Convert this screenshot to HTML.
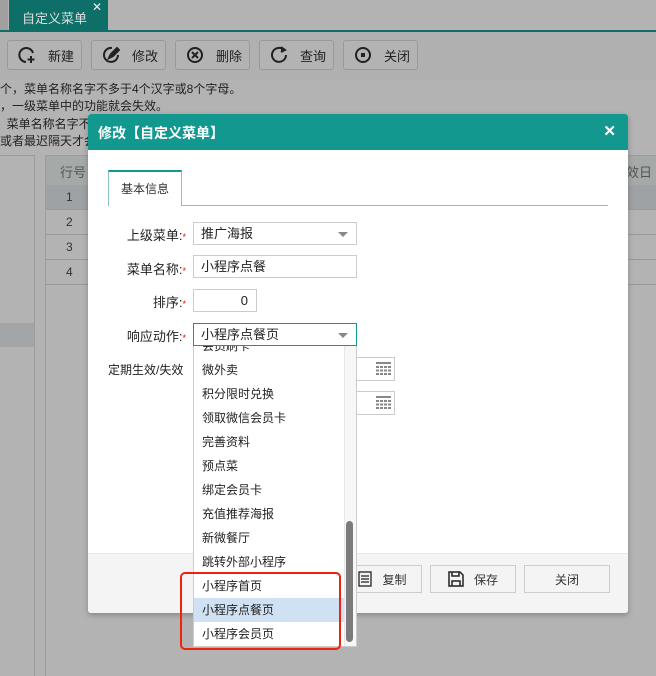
<!DOCTYPE html>
<html><head><meta charset="utf-8"><style>
*{margin:0;padding:0;box-sizing:border-box}
html,body{width:656px;height:676px;overflow:hidden}
body{background:#b3b3b3;font-family:"Liberation Sans","Noto Sans CJK SC",sans-serif;font-size:12px;color:#333;position:relative}
.a{position:absolute}
.tb{top:40px;width:75px;height:30px;border:1px solid #999;border-radius:3px;background:#b3b3b3;font-size:13px;color:#222;display:flex;align-items:center;padding-left:10px}
.tb svg{margin-right:12px}
.txt{left:0;font-size:12px;color:#222;white-space:nowrap}
.lbl{width:86px;text-align:right;left:100px;font-size:13px;color:#222}
.star{color:#e00;font-size:9px}
.inp{border:1px solid #ccc;background:#fff;height:23px;font-size:13px;color:#222;padding-left:7px;line-height:21px}
.arr{position:absolute;right:8px;top:9px;width:0;height:0;border-left:5px solid transparent;border-right:5px solid transparent;border-top:5px solid #888}
.it{position:absolute;left:0;width:150px;height:24px;line-height:24px;padding-left:8px;font-size:12px;color:#222}
.fb{top:565px;height:28px;border:1px solid #ccc;background:#f4f4f4;font-size:12px;color:#333;display:flex;align-items:center;justify-content:center}
</style></head><body>
<div class="a" style="left:0;top:0;width:8px;height:30px;background:#a0a0a0"></div>
<div class="a" style="left:9px;top:0;width:99px;height:31px;background:#0e6f69;color:#ddd;font-size:13px;padding:8px 0 0 13px">自定义菜单<span style="position:absolute;right:6px;top:0px;color:#eee;font-size:12px">✕</span></div>
<div class="a" style="left:0;top:30px;width:656px;height:2px;background:#0e6f69"></div>
<div class="a" style="left:0;top:32px;width:656px;height:48px;background:#b0b0b0"></div>
<div class="a tb" style="left:7px"><svg width="18" height="18" viewBox="0 0 18 18" fill="none" stroke="#222" stroke-width="2"><path d="M15 7A7 7 0 1 0 8 16"/><path d="M13 10v7M9.5 13.5h7"/></svg>新建</div>
<div class="a tb" style="left:91px"><svg width="18" height="18" viewBox="0 0 18 18" fill="none" stroke="#222" stroke-width="2"><path d="M10 2A7 7 0 1 0 16 9"/><path d="M7 12l2-4 6-6 2 2-6 6z" fill="#222"/></svg>修改</div>
<div class="a tb" style="left:175px"><svg width="18" height="18" viewBox="0 0 18 18" fill="none" stroke="#222" stroke-width="2"><circle cx="9" cy="9" r="7"/><path d="M6 6l6 6M12 6l-6 6"/></svg>删除</div>
<div class="a tb" style="left:259px"><svg width="18" height="18" viewBox="0 0 18 18" fill="none" stroke="#222" stroke-width="2"><path d="M14 4A7 7 0 1 0 16 9"/><path d="M11 1l4 3-4 2" fill="#222"/></svg>查询</div>
<div class="a tb" style="left:343px"><svg width="18" height="18" viewBox="0 0 18 18" fill="none" stroke="#222" stroke-width="2"><circle cx="9" cy="9" r="7"/><rect x="7" y="7" width="4" height="4" fill="#222" stroke="none"/></svg>关闭</div>
<div class="a txt" style="top:80px">个，菜单名称名字不多于4个汉字或8个字母。</div>
<div class="a txt" style="top:97px">，一级菜单中的功能就会失效。</div>
<div class="a txt" style="top:115px">&nbsp;&nbsp;菜单名称名字不</div>
<div class="a txt" style="top:132px">或者最迟隔天才会</div>
<div class="a" style="left:-1px;top:155px;width:36px;height:530px;border:1px solid #9c9c9c"></div>
<div class="a" style="left:0;top:323px;width:34px;height:24px;background:#a3a6a8"></div>
<div class="a" style="left:45px;top:155px;width:620px;height:530px;border:1px solid #9c9c9c"></div>
<div class="a" style="left:46px;top:156px;width:610px;height:29px;background:#a5aaa9;color:#555;font-size:13px;padding:6px 0 0 14px">行号<span style="position:absolute;left:580px">效日</span></div>
<div class="a" style="left:46px;top:185px;width:610px;height:25px;background:#9ea2a4;border-bottom:1px solid #999;padding:5px 0 0 20px">1</div>
<div class="a" style="left:46px;top:210px;width:610px;height:25px;border-bottom:1px solid #999;padding:5px 0 0 20px">2</div>
<div class="a" style="left:46px;top:235px;width:610px;height:25px;border-bottom:1px solid #999;padding:5px 0 0 20px">3</div>
<div class="a" style="left:46px;top:260px;width:610px;height:25px;border-bottom:1px solid #999;padding:5px 0 0 20px">4</div>
<div class="a" style="left:88px;top:114px;width:540px;height:499px;background:#fff;border-radius:3px;box-shadow:0 2px 6px rgba(0,0,0,.25);overflow:hidden">
 <div style="height:36px;background:#139890;color:#fff;font-size:14px;font-weight:bold;padding:9px 0 0 10px">修改【自定义菜单】<span style="position:absolute;right:12px;top:8px;font-size:15px">✕</span></div>
 <div style="position:absolute;left:0;top:439px;width:540px;height:60px;background:#f4f4f4;border-top:1px solid #e6e6e6"></div>
</div>
<div class="a" style="left:108px;top:170px;width:74px;height:36px;border:1px solid #88c4c0;border-top:2px solid #139890;border-bottom:none;background:#fff;font-size:12px;color:#333;padding:8px 0 0 12px">基本信息</div>
<div class="a" style="left:181px;top:205px;width:427px;height:1px;background:#88c4c0"></div>
<div class="a lbl" style="top:225px">上级菜单:<span class="star">*</span></div>
<div class="a inp" style="left:193px;top:222px;width:164px">推广海报<div class="arr"></div></div>
<div class="a lbl" style="top:259px">菜单名称:<span class="star">*</span></div>
<div class="a inp" style="left:193px;top:255px;width:164px">小程序点餐</div>
<div class="a lbl" style="top:292px">排序:<span class="star">*</span></div>
<div class="a inp" style="left:193px;top:289px;width:64px;text-align:right;padding-right:8px">0</div>
<div class="a lbl" style="top:326px">响应动作:<span class="star">*</span></div>
<div class="a inp" style="left:193px;top:323px;width:164px;border-color:#139890">小程序点餐页<div class="arr"></div></div>
<div class="a" style="left:108px;top:361px;font-size:12px;color:#222">定期生效/失效</div>
<div class="a inp" style="left:330px;top:357px;width:65px;height:24px"></div>
<div class="a inp" style="left:330px;top:391px;width:65px;height:24px"></div>
<svg class="a" style="left:376px;top:362px" width="15" height="13"><g fill="#888"><rect x="0" y="0" width="15" height="2"/><rect x="0" y="4" width="3" height="2"/><rect x="4" y="4" width="3" height="2"/><rect x="8" y="4" width="3" height="2"/><rect x="12" y="4" width="3" height="2"/><rect x="0" y="7.5" width="3" height="2"/><rect x="4" y="7.5" width="3" height="2"/><rect x="8" y="7.5" width="3" height="2"/><rect x="12" y="7.5" width="3" height="2"/><rect x="0" y="11" width="3" height="2"/><rect x="4" y="11" width="3" height="2"/><rect x="8" y="11" width="3" height="2"/><rect x="12" y="11" width="3" height="2"/></g></svg>
<svg class="a" style="left:376px;top:396px" width="15" height="13"><g fill="#888"><rect x="0" y="0" width="15" height="2"/><rect x="0" y="4" width="3" height="2"/><rect x="4" y="4" width="3" height="2"/><rect x="8" y="4" width="3" height="2"/><rect x="12" y="4" width="3" height="2"/><rect x="0" y="7.5" width="3" height="2"/><rect x="4" y="7.5" width="3" height="2"/><rect x="8" y="7.5" width="3" height="2"/><rect x="12" y="7.5" width="3" height="2"/><rect x="0" y="11" width="3" height="2"/><rect x="4" y="11" width="3" height="2"/><rect x="8" y="11" width="3" height="2"/><rect x="12" y="11" width="3" height="2"/></g></svg>
<div class="a fb" style="left:343px;width:79px"><svg width="14" height="16" style="margin-right:10px" fill="none" stroke="#222" stroke-width="1.3"><rect x="1" y="1" width="12" height="14"/><path d="M3 5h8M3 8h8M3 11h8"/></svg>复制</div>
<div class="a fb" style="left:430px;width:86px"><svg width="16" height="16" style="margin-right:10px" fill="none" stroke="#222" stroke-width="1.5"><path d="M1 1h11l3 3v11H1z"/><path d="M4 1v4h7V1M4 15v-5h8v5"/></svg>保存</div>
<div class="a fb" style="left:524px;width:86px">关闭</div>
<div class="a" style="left:193px;top:346px;width:164px;height:301px;background:#fff;border:1px solid #ccc;border-top:none;overflow:hidden">
 <div class="it" style="top:-12px">会员刷卡</div>
 <div class="it" style="top:12px">微外卖</div>
 <div class="it" style="top:36px">积分限时兑换</div>
 <div class="it" style="top:60px">领取微信会员卡</div>
 <div class="it" style="top:84px">完善资料</div>
 <div class="it" style="top:108px">预点菜</div>
 <div class="it" style="top:132px">绑定会员卡</div>
 <div class="it" style="top:156px">充值推荐海报</div>
 <div class="it" style="top:180px">新微餐厅</div>
 <div class="it" style="top:204px">跳转外部小程序</div>
 <div class="it" style="top:228px">小程序首页</div>
 <div class="it" style="top:252px;background:#cfe1f2">小程序点餐页</div>
 <div class="it" style="top:276px">小程序会员页</div>
 <div style="position:absolute;left:150px;top:0;width:13px;height:301px;background:#f7f7f7;border-left:1px solid #e6e6e6"></div>
 <div style="position:absolute;left:152px;top:175px;width:7px;height:121px;background:#7b7b7b;border-radius:4px"></div>
</div>
<div class="a" style="left:180px;top:572px;width:161px;height:78px;border:2px solid #f0220f;border-radius:5px"></div>
</body></html>
